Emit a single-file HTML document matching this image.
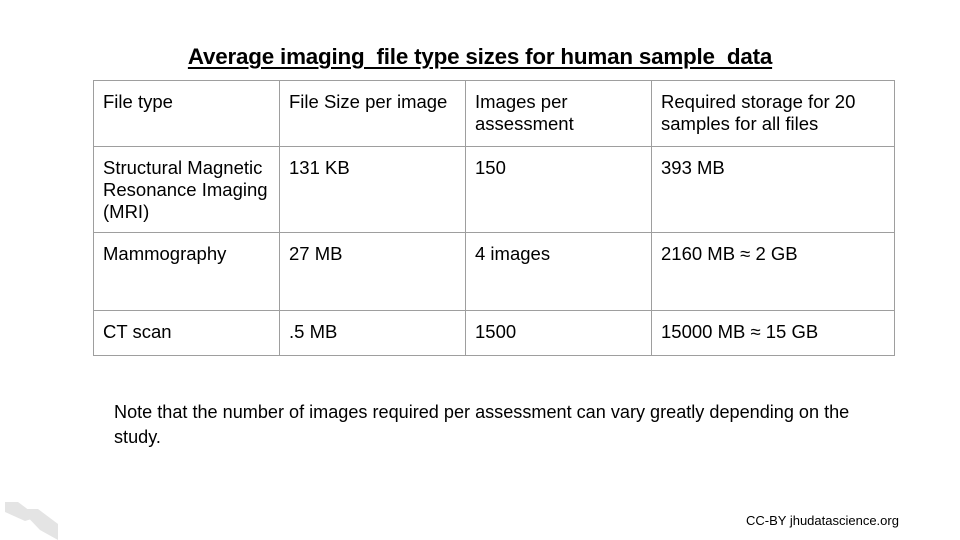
<!DOCTYPE html>
<html><head><meta charset="utf-8"><style>
body{margin:0;width:960px;height:540px;background:#fff;position:relative;overflow:hidden;font-family:"Liberation Sans",Arial,sans-serif;color:#000}
.title{position:absolute;top:44px;left:0;width:960px;text-align:center;font-weight:bold;font-size:22.4px;text-decoration:underline;text-underline-offset:3px;letter-spacing:-0.2px}
table{position:absolute;left:93px;top:80px;border-collapse:collapse}
td{border:1px solid #9e9e9e;vertical-align:top;padding:10px 9px 0 9px;font-size:18.5px;line-height:22px;box-sizing:border-box}
.note{position:absolute;left:114px;top:400px;font-size:18.1px;line-height:25px;width:760px}
.cc{position:absolute;left:746px;top:513px;font-size:13px}
</style></head><body>
<div class="title">Average imaging&nbsp; file type sizes for human sample&nbsp; data</div>
<table>
<tr style="height:66px"><td style="width:186px">File type</td><td style="width:186px">File Size per image</td><td style="width:186px">Images per assessment</td><td style="width:243px">Required storage for 20 samples for all files</td></tr>
<tr style="height:86px"><td>Structural Magnetic Resonance Imaging (MRI)</td><td>131 KB</td><td>150</td><td>393 MB</td></tr>
<tr style="height:78px"><td>Mammography</td><td>27 MB</td><td>4 images</td><td>2160 MB ≈ 2 GB</td></tr>
<tr style="height:45px"><td>CT scan</td><td>.5 MB</td><td>1500</td><td>15000 MB ≈ 15 GB</td></tr>
</table>
<div class="note">Note that the number of images required per assessment can vary greatly depending on the study.</div>
<div class="cc">CC-BY jhudatascience.org</div>
<svg style="position:absolute;left:0;top:490px" width="80" height="50"><polygon points="5,12 18,12 38,27 25,31 5,22" fill="#e4e4e4"/><polygon points="20,19 38,19 58,34 58,50 40,40" fill="#e4e4e4"/></svg>
</body></html>
